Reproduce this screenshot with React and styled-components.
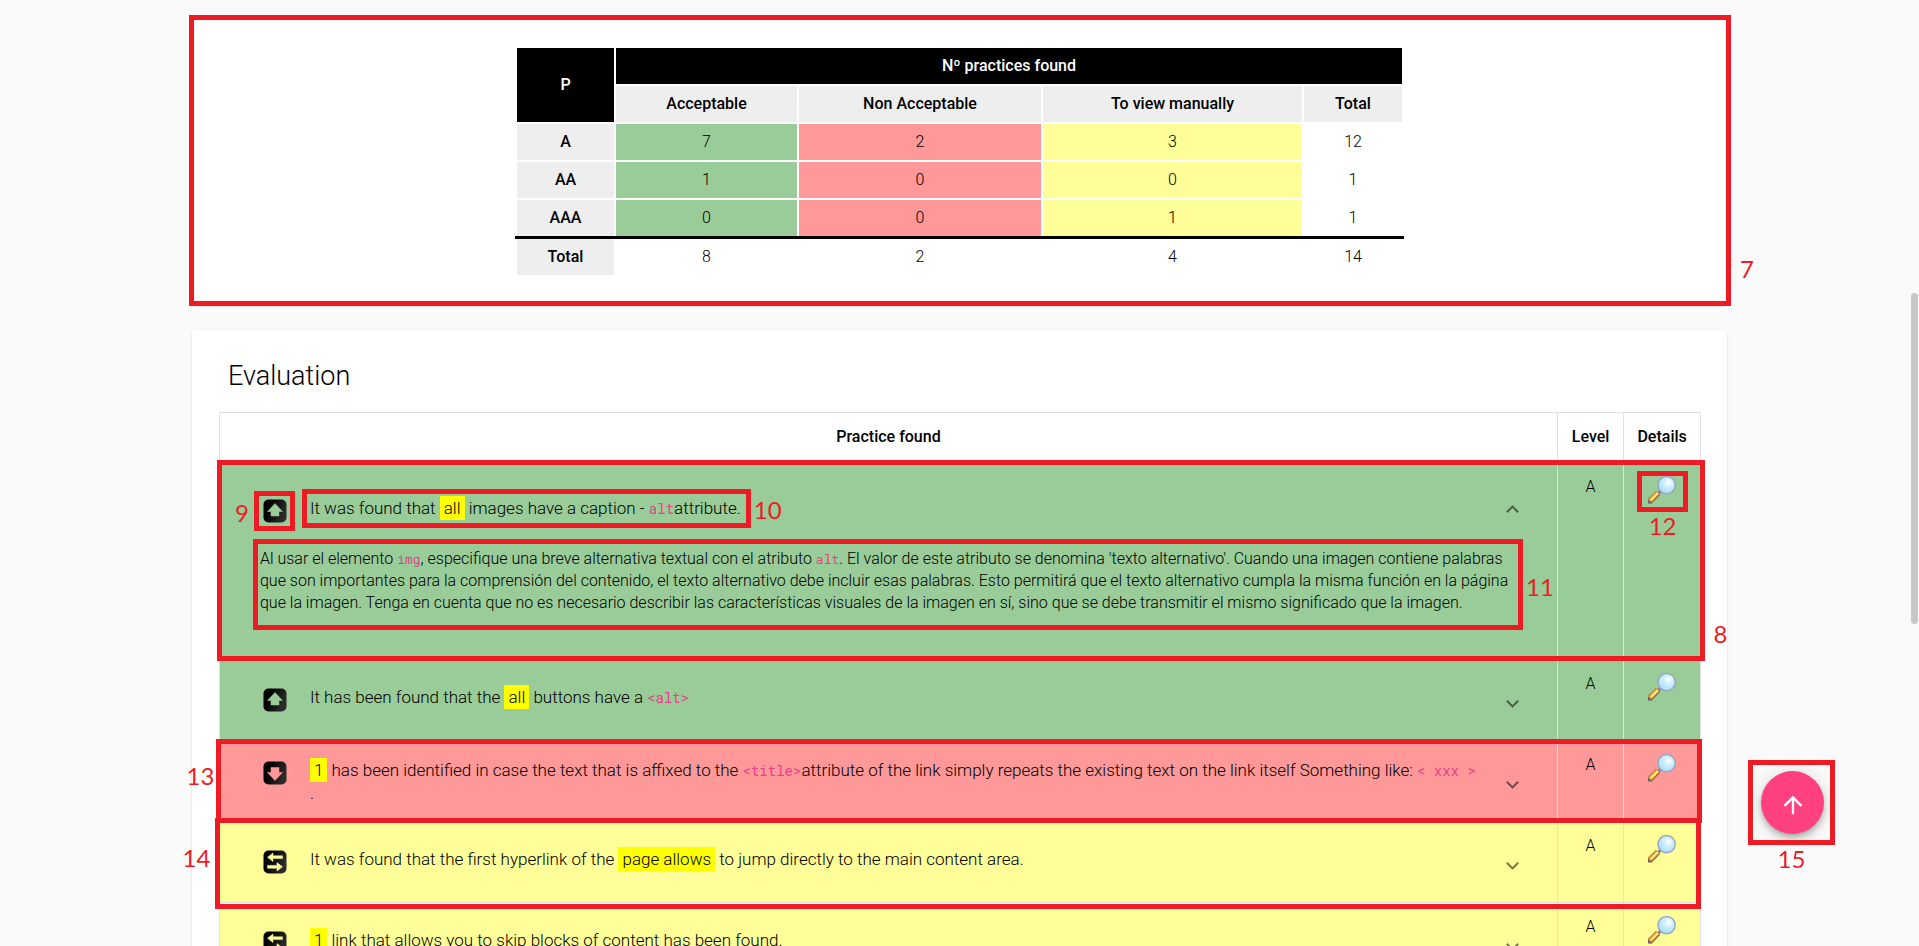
import React from "react";
import styled, { createGlobalStyle, css } from "styled-components";

const GlobalStyle = createGlobalStyle`
  *, *::before, *::after { box-sizing: border-box; }
  html, body { margin: 0; height: 100%; background: #fafafa; overflow: hidden; }
  body {
    font-family: Roboto, "Liberation Sans", sans-serif;
    font-size: 16px;
    font-weight: 300;
    line-height: 22px;
    color: #000;
  }
`;

const tones = { ok: "#99cc99", bad: "#ff9999", warn: "#ffff99" };

const Page = styled.main`
  display: flex;
  flex-direction: column;
  align-items: center;
  gap: 25px;
  height: 100vh;
  padding-top: 18px;
  overflow: hidden;
`;

const Card = styled.section`
  position: relative;
  flex: none;
  width: 80%;
  padding: ${(p) => p.$padding};
  background: #fff;
  border-radius: 4px;
  box-shadow: 0 2px 1px -1px rgba(0, 0, 0, 0.2), 0 1px 1px rgba(0, 0, 0, 0.14),
    0 1px 3px rgba(0, 0, 0, 0.12);
`;

/* Red frame laid over the part of the page that it numbers. */
const Frame = styled.span`
  position: absolute;
  z-index: 2;
  inset: ${(p) => p.$inset};
  border: 5px solid #ed1c24;
  pointer-events: none;
`;

const sides = {
  left: css`right: 100%; bottom: ${(p) => p.$shift}; margin-right: ${(p) => p.$gap};`,
  right: css`left: 100%; bottom: ${(p) => p.$shift}; margin-left: ${(p) => p.$gap};`,
  below: css`left: 0; right: 0; top: 100%; margin-top: 5px; text-align: center;`,
};

const FrameNumber = styled.span`
  position: absolute;
  font: 400 24px/28px Lato, sans-serif;
  color: #ed1c24;
  ${(p) => sides[p.$side]}
`;

function Callout({ n, inset, side = "right", shift = "0", gap = "10px" }) {
  return (
    <Frame $inset={inset}>
      <FrameNumber $side={side} $shift={shift} $gap={gap}>{n}</FrameNumber>
    </Frame>
  );
}

const SummaryTable = styled.table`
  width: 887px;
  margin: 0 auto;
  table-layout: fixed;
  border-collapse: collapse;
  text-align: center;
  th, td { height: 38px; padding: 0; border: 2px solid #fff; }
  th { background: #eee; font-weight: 500; }
  tbody tr:last-child > * { height: 39px; border-top: 3px solid #000; }
`;

const Col = styled.col`
  width: ${(p) => p.$width};
`;

const DarkHead = styled.th`
  && { background: #000; color: #fff; }
`;

const ToneCell = styled.td`
  background: ${(p) => tones[p.$tone] || "transparent"};
`;

const Heading = styled.h2`
  margin: 0 9px 20px;
  font-size: 27px;
  line-height: 32px;
  font-weight: 300;
`;

const EvalTable = styled.table`
  width: 100%;
  table-layout: fixed;
  border-collapse: collapse;
  text-align: center;
  th, td { border: 1px solid #dee2e6; }
  th { height: 50px; padding: 0 0 2px; font-weight: 500; }
  td { padding: 13px 0 0; vertical-align: top; }
`;

const Row = styled.tr`
  position: relative;
  height: ${(p) => (p.$open ? "197px" : "81px")};
  background: ${(p) => tones[p.$tone]};
`;

const PracticeCell = styled.td`
  && { padding: 16px 40px; text-align: left; }
`;

const Toggle = styled.button`
  display: flex;
  align-items: center;
  justify-content: space-between;
  width: 100%;
  height: ${(p) => (p.$open ? "64px" : "48px")};
  padding: 0;
  border: 0;
  background: none;
  font: inherit;
  font-size: 17px;
  color: inherit;
  text-align: left;
  cursor: pointer;
`;

const Title = styled.span`
  display: flex;
  align-items: flex-start;
  gap: 23px;
`;

const Anchor = styled.span`
  position: relative;
`;

const IconBox = styled(Anchor)`
  display: flex;
  align-items: center;
  height: 28px;
  padding-left: 3px;
`;

const Mark = styled.mark`
  padding: 2px 4px;
  background: #ff0;
  color: inherit;
`;

const Code = styled.code`
  font-family: "Roboto Mono", "Liberation Mono", monospace;
  font-size: 13px;
  font-weight: 400;
  color: #e83e8c;
`;

const TitleCode = styled(Code)`
  font-size: 14px;
`;

const Chevron = styled.span`
  flex: none;
  width: 9px;
  height: 9px;
  margin-top: ${(p) => (p.$open ? "0" : "3px")};
  border: solid rgba(0, 0, 0, 0.54);
  border-width: 0 2px 2px 0;
  transform: ${(p) => (p.$open ? "rotate(225deg)" : "rotate(45deg)")};
`;

const Help = styled.p`
  position: relative;
  margin: 0;
  padding: 5px 0 29px;
`;

const DetailButton = styled.button`
  position: relative;
  padding: 0;
  border: 0;
  background: none;
  line-height: 0;
  cursor: pointer;
`;

const TopButton = styled.button`
  position: fixed;
  right: 95px;
  bottom: 112px;
  display: flex;
  align-items: center;
  justify-content: center;
  width: 63px;
  height: 63px;
  padding: 4px 0 0;
  border: 0;
  border-radius: 50%;
  background: #ff4081;
  color: #fff;
  box-shadow: 0 3px 5px -1px rgba(0, 0, 0, 0.2), 0 6px 10px rgba(0, 0, 0, 0.14),
    0 1px 18px rgba(0, 0, 0, 0.12);
  cursor: pointer;
`;

const ScrollThumb = styled.div`
  position: fixed;
  top: 31%;
  right: 1px;
  width: 7px;
  height: 35%;
  border-radius: 4px;
  background: #c8c8c8;
`;

const arrows = {
  ok: "M12 4.5L19.5 12.5H16V17H8V12.5H4.5Z",
  bad: "M12 19.5L19.5 11.5H16V6.5H8V11.5H4.5Z",
  warn: "M4.5 7.2L10 3V5.8H19.5V8.6H10V11.6ZM19.5 16.8L14 12.6V15.4H4.5V18.2H14V21Z",
};

function StatusIcon({ tone }) {
  return (
    <svg width="24" height="24" viewBox="0 0 24 24" aria-hidden="true">
      <defs>
        <linearGradient id={`plate-${tone}`} x1="0" y1="0" x2="1" y2="0.4">
          <stop offset="0.3" stopColor="#000" />
          <stop offset="1" stopColor="#2c2c2c" />
        </linearGradient>
      </defs>
      <rect x="0.5" y="0.5" width="23" height="23" rx="5" fill={`url(#plate-${tone})`} />
      <path d={arrows[tone]} fill={tones[tone]} stroke={tones[tone]} strokeWidth="0.5" />
    </svg>
  );
}

function MagnifierIcon() {
  return (
    <svg width="28" height="28" viewBox="0 0 28 28" aria-hidden="true">
      <defs>
        <radialGradient id="lens" cx="0.6" cy="0.35" r="0.7">
          <stop offset="0" stopColor="#f4fcff" />
          <stop offset="0.5" stopColor="#c4ecfd" />
          <stop offset="1" stopColor="#a4dcf8" />
        </radialGradient>
      </defs>
      <path d="M9 18.6L13 14.6" stroke="#7c7f96" strokeWidth="3" />
      <path d="M1.4 25.6L10 17" stroke="#9a6a35" strokeWidth="6" />
      <path d="M1.6 24.8L9.8 16.6" stroke="#f3a526" strokeWidth="4" />
      <path d="M3 24.2L10 17.2" stroke="#fff0a8" strokeWidth="1.8" />
      <path d="M0 23.4L4 27.4H0Z" fill="#6d6070" />
      <circle cx="18.6" cy="9.2" r="8.6" fill="url(#lens)" stroke="#9aa6c4" strokeWidth="1.4" />
      <circle cx="21" cy="6.6" r="2" fill="#fff" opacity="0.75" />
    </svg>
  );
}

const summary = [
  ["A", 7, 2, 3, 12],
  ["AA", 1, 0, 0, 1],
  ["AAA", 0, 0, 1, 1],
  ["Total", 8, 2, 4, 14],
];
const columnTones = ["ok", "bad", "warn"];

function Summary() {
  return (
    <SummaryTable>
      <colgroup>
        <Col $width="99px" />
        <Col $width="183px" />
        <Col $width="244px" />
        <Col $width="261px" />
        <Col $width="100px" />
      </colgroup>
      <thead>
        <tr>
          <DarkHead rowSpan={2}>P</DarkHead>
          <DarkHead colSpan={4}>Nº practices found</DarkHead>
        </tr>
        <tr>
          <th>Acceptable</th>
          <th>Non Acceptable</th>
          <th>To view manually</th>
          <th>Total</th>
        </tr>
      </thead>
      <tbody>
        {summary.map(([name, ...values]) => (
          <tr key={name}>
            <th scope="row">{name}</th>
            {values.map((v, i) => (
              <ToneCell key={i} $tone={name === "Total" ? undefined : columnTones[i]}>{v}</ToneCell>
            ))}
          </tr>
        ))}
      </tbody>
    </SummaryTable>
  );
}

const practices = [
  {
    tone: "ok",
    open: true,
    frame: <Callout n="8" inset="-3px -4px -1px -2px" shift="8px" gap="14px" />,
    iconFrame: <Callout n="9" inset="-6px -8px -6px -6px" side="left" shift="-1px" />,
    titleFrame: <Callout n="10" inset="-8px -10px -8px -8px" shift="-1px" gap="8px" />,
    detailFrame: <Callout n="12" inset="-5px -12px -8px -11px" side="below" />,
    title: (
      <>
        It was found that <Mark>all</Mark> images have a caption - <TitleCode>alt</TitleCode>attribute.
      </>
    ),
    help: (
      <>
        Al usar el elemento <Code>img</Code>, especifique una breve alternativa textual con el
        atributo <Code>alt</Code>. El valor de este atributo se denomina 'texto alternativo'.
        Cuando una imagen contiene palabras que son importantes para la comprensión del contenido, el
        texto alternativo debe incluir esas palabras. Esto permitirá que el texto alternativo cumpla la
        misma función en la página que la imagen. Tenga en cuenta que no es necesario describir las
        características visuales de la imagen en sí, sino que se debe transmitir el mismo significado que
        la imagen.
      </>
    ),
  },
  {
    tone: "ok",
    title: (
      <>It has been found that the <Mark>all</Mark> buttons have a <TitleCode>&lt;alt&gt;</TitleCode></>
    ),
  },
  {
    tone: "bad",
    frame: <Callout n="13" inset="-2px -1px -1px -3px" side="left" shift="28px" gap="7px" />,
    title: (
      <>
        <Mark>1</Mark> has been identified in case the text that is affixed to the{" "}
        <TitleCode>&lt;title&gt;</TitleCode>attribute of the link simply repeats the existing text on
        the link itself Something like: <TitleCode>&lt; xxx &gt;</TitleCode>
        <br />.
      </>
    ),
  },
  {
    tone: "warn",
    frame: <Callout n="14" inset="-4px 0 -6px -4px" side="left" shift="32px" />,
    title: (
      <>
        It was found that the first hyperlink of the <Mark>page allows</Mark> to jump directly to the
        main content area.
      </>
    ),
  },
  {
    tone: "warn",
    title: <><Mark>1</Mark> link that allows you to skip blocks of content has been found.</>,
  },
];

function PracticeRow({ item }) {
  return (
    <Row $tone={item.tone} $open={item.open}>
      <PracticeCell>
        <Toggle type="button" aria-expanded={Boolean(item.open)} $open={item.open}>
          <Title>
            <IconBox>
              <StatusIcon tone={item.tone} />
              {item.iconFrame}
            </IconBox>
            <Anchor>
              {item.title}
              {item.titleFrame}
            </Anchor>
          </Title>
          <Chevron $open={item.open} />
        </Toggle>
        {item.help && (
          <Help>
            {item.help}
            <Callout n="11" inset="-4px -6px 13px -7px" shift="24px" gap="8px" />
          </Help>
        )}
        {item.frame}
      </PracticeCell>
      <td>A</td>
      <td>
        <DetailButton type="button" aria-label="Details">
          <MagnifierIcon />
          {item.detailFrame}
        </DetailButton>
      </td>
    </Row>
  );
}

export default function App() {
  return (
    <>
      <GlobalStyle />
      <Page>
        <Card $padding="28px 27px 28px">
          <Summary />
          <Callout n="7" inset="-3px -4px -1px -3px" shift="18px" gap="14px" />
        </Card>
        <Card $padding="30px 26px 28px 27px">
          <Heading>Evaluation</Heading>
          <EvalTable>
            <colgroup>
              <col />
              <Col $width="66px" />
              <Col $width="77px" />
            </colgroup>
            <thead>
              <tr>
                <th>Practice found</th>
                <th>Level</th>
                <th>Details</th>
              </tr>
            </thead>
            <tbody>
              {practices.map((item, i) => (
                <PracticeRow key={i} item={item} />
              ))}
            </tbody>
          </EvalTable>
        </Card>
      </Page>
      <TopButton type="button" aria-label="Back to top">
        <svg width="28" height="28" viewBox="0 0 24 24" fill="currentColor" aria-hidden="true">
          <path d="M4 12l1.41 1.41L11 7.83V20h2V7.83l5.58 5.59L20 12l-8-8-8 8z" />
        </svg>
        <Callout n="15" inset="-11px -11px -11px -13px" side="below" />
      </TopButton>
      <ScrollThumb />
    </>
  );
}
